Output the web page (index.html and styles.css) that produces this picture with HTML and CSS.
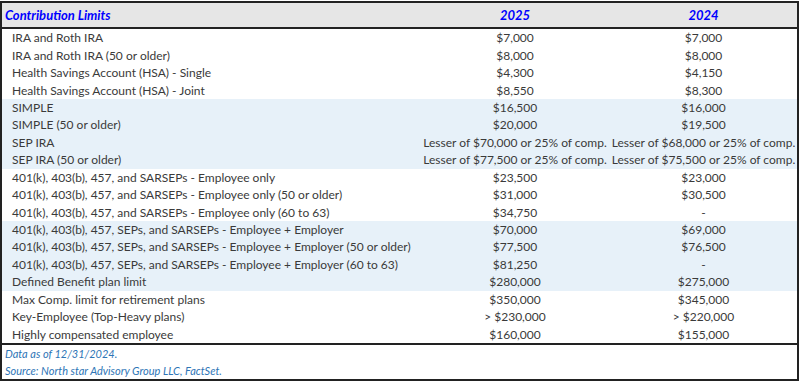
FILE: index.html
```html
<!DOCTYPE html>
<html>
<head>
<meta charset="utf-8">
<link rel="stylesheet" href="styles.css">
</head>
<body>
<div class="sheet">
  <div class="row head">
    <div class="c1">Contribution Limits</div>
    <div class="c2">2025</div>
    <div class="c3">2024</div>
  </div>
  <div class="body">
    <div class="row"><div class="c1">IRA and Roth IRA</div><div class="c2">$7,000</div><div class="c3">$7,000</div></div>
    <div class="row"><div class="c1">IRA and Roth IRA (50 or older)</div><div class="c2">$8,000</div><div class="c3">$8,000</div></div>
    <div class="row"><div class="c1">Health Savings Account (HSA) - Single</div><div class="c2">$4,300</div><div class="c3">$4,150</div></div>
    <div class="row"><div class="c1">Health Savings Account (HSA) - Joint</div><div class="c2">$8,550</div><div class="c3">$8,300</div></div>
    <div class="row alt"><div class="c1">SIMPLE</div><div class="c2">$16,500</div><div class="c3">$16,000</div></div>
    <div class="row alt"><div class="c1">SIMPLE (50 or older)</div><div class="c2">$20,000</div><div class="c3">$19,500</div></div>
    <div class="row alt"><div class="c1">SEP IRA</div><div class="c2">Lesser of $70,000 or 25% of comp.</div><div class="c3">Lesser of $68,000 or 25% of comp.</div></div>
    <div class="row alt"><div class="c1">SEP IRA (50 or older)</div><div class="c2">Lesser of $77,500 or 25% of comp.</div><div class="c3">Lesser of $75,500 or 25% of comp.</div></div>
    <div class="row"><div class="c1">401(k), 403(b), 457, and SARSEPs - Employee only</div><div class="c2">$23,500</div><div class="c3">$23,000</div></div>
    <div class="row"><div class="c1">401(k), 403(b), 457, and SARSEPs - Employee only (50 or older)</div><div class="c2">$31,000</div><div class="c3">$30,500</div></div>
    <div class="row"><div class="c1">401(k), 403(b), 457, and SARSEPs - Employee only (60 to 63)</div><div class="c2">$34,750</div><div class="c3">-</div></div>
    <div class="row alt"><div class="c1">401(k), 403(b), 457, SEPs, and SARSEPs - Employee + Employer</div><div class="c2">$70,000</div><div class="c3">$69,000</div></div>
    <div class="row alt"><div class="c1">401(k), 403(b), 457, SEPs, and SARSEPs - Employee + Employer (50 or older)</div><div class="c2">$77,500</div><div class="c3">$76,500</div></div>
    <div class="row alt"><div class="c1">401(k), 403(b), 457, SEPs, and SARSEPs - Employee + Employer (60 to 63)</div><div class="c2">$81,250</div><div class="c3">-</div></div>
    <div class="row alt"><div class="c1">Defined Benefit plan limit</div><div class="c2">$280,000</div><div class="c3">$275,000</div></div>
    <div class="row"><div class="c1">Max Comp. limit for retirement plans</div><div class="c2">$350,000</div><div class="c3">$345,000</div></div>
    <div class="row"><div class="c1">Key-Employee (Top-Heavy plans)</div><div class="c2">&gt; $230,000</div><div class="c3">&gt; $220,000</div></div>
    <div class="row"><div class="c1">Highly compensated employee</div><div class="c2">$160,000</div><div class="c3">$155,000</div></div>
  </div>
  <div class="foot">
    <div class="note">Data as of 12/31/2024.</div>
    <div class="note">Source: North star Advisory Group LLC, FactSet.</div>
  </div>
</div>
</body>
</html>
```
FILE: styles.css
```css
html, body {
  margin: 0;
  padding: 0;
  background: #ffffff;
}
body {
  padding-top: 1px;
  font-family: Lato, "Liberation Sans", sans-serif;
  color: #3a3a3a;
}
.sheet {
  width: 795px;
  border: 2px solid #222222;
}
.row {
  display: grid;
  grid-template-columns: 418px 190px 187px;
  height: 17.44px;
  align-items: center;
  font-size: 12px;
  line-height: 17px;
  white-space: nowrap;
}
.row .c1 { padding-left: 10px; }
.row .c2, .row .c3 { text-align: center; }
.alt { background: #e7f1f9; }
.head {
  height: 24px;
  background: #e6e6e6;
  border-bottom: 2px solid #222222;
  font-weight: bold;
  font-style: italic;
  color: #0000ff;
  font-size: 13px;
}
.head .c1 { padding-left: 3px; }
.foot {
  border-top: 2px solid #222222;
  height: 34px;
  display: flex;
  flex-direction: column;
  justify-content: center;
  padding-left: 3px;
}
.note {
  font-size: 11px;
  line-height: 17px;
  font-style: italic;
  color: #2e75b6;
}
```
